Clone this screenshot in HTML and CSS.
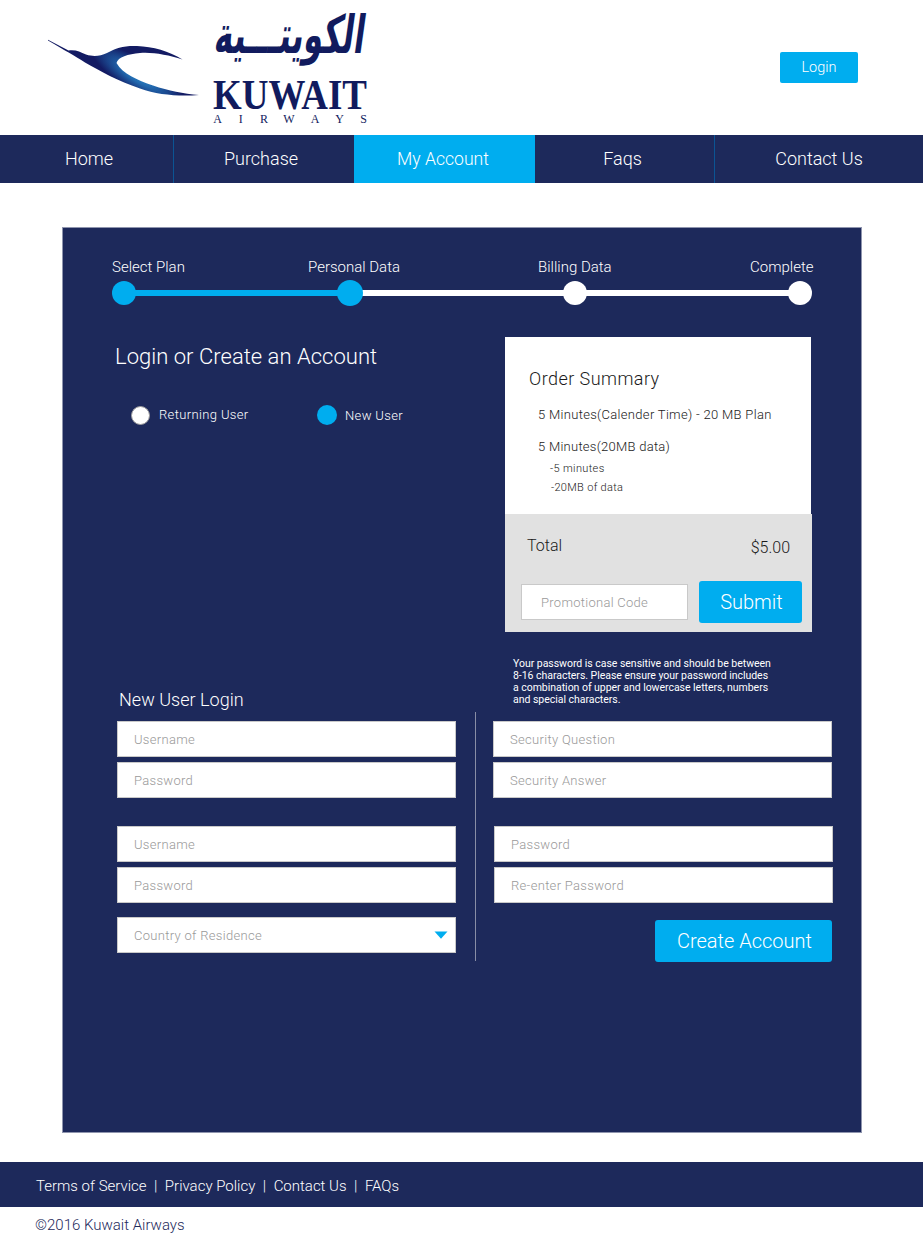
FILE: index.html
```
<!DOCTYPE html>
<html lang="en">
<head>
<meta charset="utf-8">
<title>Kuwait Airways</title>
<link rel="stylesheet" href="styles.css">
</head>
<body>
<header class="header">
  <svg class="logo" width="330" height="130" viewBox="0 0 330 130" role="img" aria-label="Kuwait Airways">
    <defs>
      <radialGradient id="bird" gradientUnits="userSpaceOnUse" cx="98" cy="76" r="54" gradientTransform="translate(98 76) rotate(32) scale(1 .3) translate(-98 -76)">
        <stop offset="0" stop-color="#2a86c6"/>
        <stop offset=".35" stop-color="#2168ae"/>
        <stop offset="1" stop-color="#131b63"/>
      </radialGradient>
    </defs>
    <path fill="url(#bird)" d="M8 39.700 L28.500 50.500 C36 49.500 40 52 46 54.500 C54 57 60 56 67 53 C76 48 84 45.500 97 46 C113 46.500 129 51 142.500 59.500 C128 55 113 52 100 53 C88 54 78 57 76.500 63 C83 74 97 80 113 85.500 C129 91 143 93.500 159 95 C139 96.500 118 95 100 88.500 C78 81 60 71 45 62.500 C35 56 25 50.500 8 40.500 Z"/>
    <text class="logo-arabic" direction="rtl" transform="translate(323 53) skewX(-8) scale(1 1.550)" x="0" y="0" textLength="150" lengthAdjust="spacingAndGlyphs">الكويتـــية</text>
    <text class="logo-name" x="173" y="109" textLength="154" lengthAdjust="spacingAndGlyphs">KUWAIT</text>
    <text class="logo-sub" x="177.500 200.700 224 249 275 299.500 323.500" y="123.300">AIRWAYS</text>
  </svg>
  <button class="btn btn-login">Login</button>
</header>

<nav class="nav">
  <a class="nav-item">Home</a>
  <a class="nav-item">Purchase</a>
  <a class="nav-item active">My Account</a>
  <a class="nav-item">Faqs</a>
  <a class="nav-item">Contact Us</a>
</nav>

<main class="panel">
  <div class="step-labels">
    <span>Select Plan</span><span>Personal Data</span><span>Billing Data</span><span>Complete</span>
  </div>
  <div class="steps">
    <i class="dot done"></i><i class="bar done"></i><i class="dot current"></i><i class="bar"></i><i class="dot"></i><i class="bar"></i><i class="dot"></i>
  </div>

  <div class="top">
    <section class="account">
      <h1>Login or Create an Account</h1>
      <div class="choices">
        <label class="choice"><i class="radio"></i>Returning User</label>
        <label class="choice selected"><i class="radio"></i>New User</label>
      </div>
    </section>
    <aside class="order">
      <div class="summary">
        <h2>Order Summary</h2>
        <p class="plan">5 Minutes(Calender Time) - 20 MB Plan</p>
        <p class="plan second">5 Minutes(20MB data)</p>
        <p class="detail">-5 minutes</p>
        <p class="detail last">-20MB of data</p>
      </div>
      <div class="checkout">
        <div class="total"><span>Total</span><span class="price">$5.00</span></div>
        <div class="promo"><div class="field">Promotional Code</div><button class="btn btn-submit">Submit</button></div>
      </div>
    </aside>
  </div>

  <div class="captions">
    <h3>New User Login</h3>
    <p class="hint">Your password is case sensitive and should be between<br>8-16 characters. Please ensure your password includes<br>a combination of upper and lowercase letters, numbers<br>and special characters.</p>
  </div>

  <div class="form">
    <div class="column left">
      <div class="field">Username</div>
      <div class="field">Password</div>
      <div class="field group">Username</div>
      <div class="field">Password</div>
      <div class="field select">Country of Residence
        <svg width="14" height="8" viewBox="0 0 14 8"><path fill="#00adef" d="M.5 .5h13L7 7.800z"/></svg>
      </div>
    </div>
    <div class="column right">
      <div class="field">Security Question</div>
      <div class="field">Security Answer</div>
      <div class="field group inset">Password</div>
      <div class="field inset">Re-enter Password</div>
      <button class="btn btn-create">Create Account</button>
    </div>
  </div>
</main>

<footer class="footer">
  <a>Terms of Service</a><b>|</b><a>Privacy Policy</a><b>|</b><a>Contact Us</a><b>|</b><a>FAQs</a>
</footer>
<p class="copyright">©2016 Kuwait Airways</p>
</body>
</html>
```
FILE: styles.css
```
* { box-sizing: border-box; }
body { margin: 0; background: #fff; color: #fff; font: 300 15px/20px Roboto, "Liberation Sans", sans-serif; }
h1, h2, h3, p { margin: 0; font-weight: 300; }

.header { height: 135px; display: flex; justify-content: space-between; align-items: flex-start; padding: 0 65px 0 40px; }
.logo { display: block; overflow: visible; }
.logo-arabic { font: 700 34px "DejaVu Sans", sans-serif; fill: #111b5e; }
.logo-name { font: 700 42.500px "Liberation Serif", serif; fill: #111b5e; }
.logo-sub { font: 12px "Liberation Serif", serif; fill: #111b5e; text-anchor: middle; }

.btn { display: block; border: 0; border-radius: 3px; padding: 0; background: #00adef; color: #fff; font: 300 20px/42px Roboto, "Liberation Sans", sans-serif; text-align: center; }
.btn-login { width: 78px; height: 31px; margin-top: 52px; border-radius: 2px; font-size: 14.500px; line-height: 31px; }

.nav { height: 48px; display: grid; grid-template-columns: 174px 180px 181px 180px 1fr; background: #1d295b; font-size: 18px; line-height: 48px; text-align: center; }
.nav-item { border-right: 1px solid #0b5493; }
.nav-item:first-child { padding-left: 5px; }
.nav-item:nth-child(2) { border: 0; padding-right: 6px; }
.nav-item.active { background: #00adef; border: 0; padding-right: 3px; font-size: 17.600px; }
.nav-item:nth-child(4) { padding-right: 4px; }
.nav-item:last-child { border: 0; }

.panel { width: 800px; height: 906px; margin: 44px 0 0 62px; background: #1d295b; border: 1px solid #8f95ae; }
.step-labels { display: grid; grid-template-columns: 196px 230px 212px auto; padding: 29px 0 0 49px; }
.steps { display: flex; align-items: center; height: 26px; width: 700px; margin: 3px 0 0 49px; }
.dot { width: 24px; height: 24px; border-radius: 50%; background: #fff; }
.dot.current { width: 26px; height: 26px; }
.bar { flex: 1; height: 6px; margin: 0 -1px; background: #fff; }
.done, .dot.current { background: #00adef; }
.dot.current { z-index: 1; }

.top { display: flex; justify-content: space-between; padding: 31px 49px 0 52px; }
.account h1 { padding-top: 7px; font-size: 22px; line-height: 26px; letter-spacing: .03px; }
.choices { display: flex; padding: 34px 0 0 16px; font-size: 13px; font-weight: 350; letter-spacing: .36px; }
.choice { display: flex; align-items: center; gap: 9px; width: 186px; }
.radio { width: 19px; height: 19px; border-radius: 50%; background: #fff; border: 1px solid #9d9c9e; }
.selected .radio { width: 20px; height: 20px; margin: -2px 0 0; background: #00adef; border: 0; }
.selected { gap: 8px; padding-top: 2px; }

.order { width: 307px; color: #1a1a1a; }
.summary { width: 306px; height: 177px; padding: 32px 0 0 24px; background: #fff; }
.summary h2 { font-size: 18px; letter-spacing: .45px; }
.plan { padding: 16px 0 0 9px; font-size: 13px; letter-spacing: .31px; }
.plan.second { padding-top: 12px; letter-spacing: .26px; }
.detail { padding: 3px 0 0 21px; font-size: 11px; line-height: 18px; letter-spacing: .35px; }
.detail.last { padding: 1px 0 0 22px; letter-spacing: .31px; }
.checkout { height: 118px; padding: 22px 10px 0 16px; background: #e1e1e1; }
.total { display: flex; justify-content: space-between; padding: 0 12px 0 6px; font-size: 16px; }
.price { padding-top: 2px; }
.promo { display: flex; justify-content: space-between; align-items: center; padding-top: 23px; }
.promo .field { width: 167px; padding-left: 19px; letter-spacing: .28px; }
.btn-submit { width: 103px; height: 42px; padding-left: 2px; }

.field { height: 36px; padding-left: 16px; border: 1px solid #c9c9c9; background: #fff; color: #999; font-size: 13px; line-height: 35px; letter-spacing: .31px; }

.captions { display: flex; height: 80px; padding-left: 56px; }
.captions h3 { width: 394px; padding-top: 57px; font-size: 18px; line-height: 22px; letter-spacing: .03px; }
.hint { padding-top: 26px; font-size: 10.500px; font-weight: 400; line-height: 12px; letter-spacing: -.03px; white-space: nowrap; }

.form { display: flex; padding-left: 54px; height: 249px; }
.column { display: flex; flex-direction: column; gap: 5px; padding-top: 9px; width: 339px; }
.column .group { margin-top: 23px; }
.column.left { width: 359px; padding-right: 19px; border-right: 1px solid #888da5; }
.column.right { margin-left: 17px; }
.select { display: flex; justify-content: space-between; align-items: center; margin-top: 9px; padding-right: 7px; }
.inset { margin: 0 -1px 0 1px; }
.btn-create { width: 177px; height: 42px; margin: 12px 0 0 auto; padding-left: 2px; }

.footer { display: flex; align-items: center; height: 45px; margin-top: 29px; padding: 2px 0 0 36px; background: #1d295b; }
.footer b { width: 18.300px; text-align: center; font-weight: 300; }
.copyright { padding: 8px 0 0 35px; color: #1d295b; }
```
